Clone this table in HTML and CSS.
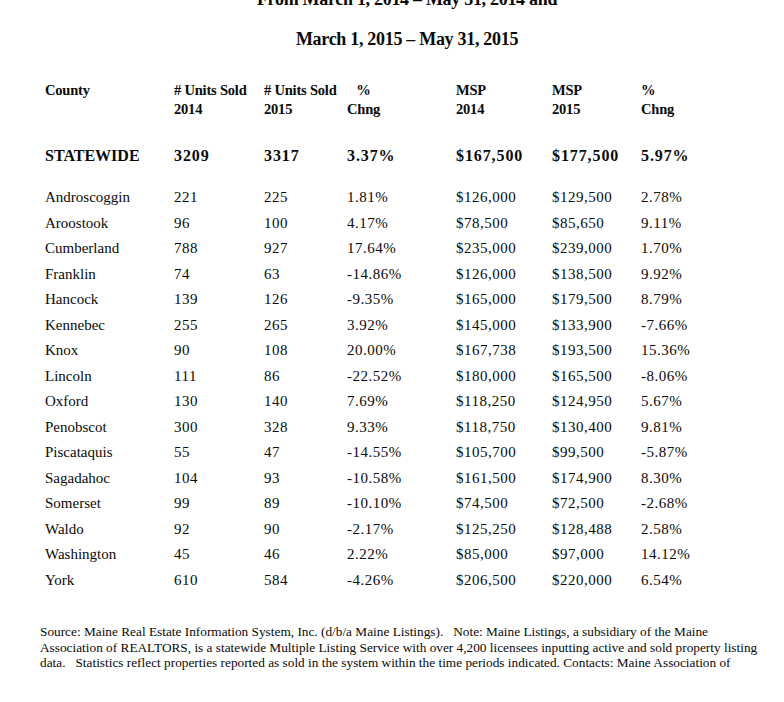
FILE: index.html
```html
<!DOCTYPE html>
<html>
<head>
<meta charset="utf-8">
<link rel="stylesheet" href="styles.css">
</head>
<body>
<div class="page">
  <div class="titles">
    <div class="title title-cut">From March 1, 2014 – May 31, 2014 and</div>
    <div class="title">March 1, 2015 – May 31, 2015</div>
  </div>

  <div class="table">
    <div class="grid head">
      <div>County</div>
      <div># Units Sold<br>2014</div>
      <div># Units Sold<br>2015</div>
      <div><span class="pct-head">%<br>Chng</span></div>
      <div>MSP<br>2014</div>
      <div>MSP<br>2015</div>
      <div>%<br>Chng</div>
      <div></div>
    </div>

    <div class="grid total">
      <div>STATEWIDE</div>
      <div class="num">3209</div>
      <div class="num">3317</div>
      <div class="num">3.37%</div>
      <div class="num">$167,500</div>
      <div class="num">$177,500</div>
      <div class="num">5.97%</div>
      <div></div>
    </div>

    <div class="rows">
      <div class="grid row"><div>Androscoggin</div><div class="num">221</div><div class="num">225</div><div class="num">1.81%</div><div class="num">$126,000</div><div class="num">$129,500</div><div class="num">2.78%</div><div></div></div>
      <div class="grid row"><div>Aroostook</div><div class="num">96</div><div class="num">100</div><div class="num">4.17%</div><div class="num">$78,500</div><div class="num">$85,650</div><div class="num">9.11%</div><div></div></div>
      <div class="grid row"><div>Cumberland</div><div class="num">788</div><div class="num">927</div><div class="num">17.64%</div><div class="num">$235,000</div><div class="num">$239,000</div><div class="num">1.70%</div><div></div></div>
      <div class="grid row"><div>Franklin</div><div class="num">74</div><div class="num">63</div><div class="num">-14.86%</div><div class="num">$126,000</div><div class="num">$138,500</div><div class="num">9.92%</div><div></div></div>
      <div class="grid row"><div>Hancock</div><div class="num">139</div><div class="num">126</div><div class="num">-9.35%</div><div class="num">$165,000</div><div class="num">$179,500</div><div class="num">8.79%</div><div></div></div>
      <div class="grid row"><div>Kennebec</div><div class="num">255</div><div class="num">265</div><div class="num">3.92%</div><div class="num">$145,000</div><div class="num">$133,900</div><div class="num">-7.66%</div><div></div></div>
      <div class="grid row"><div>Knox</div><div class="num">90</div><div class="num">108</div><div class="num">20.00%</div><div class="num">$167,738</div><div class="num">$193,500</div><div class="num">15.36%</div><div></div></div>
      <div class="grid row"><div>Lincoln</div><div class="num">111</div><div class="num">86</div><div class="num">-22.52%</div><div class="num">$180,000</div><div class="num">$165,500</div><div class="num">-8.06%</div><div></div></div>
      <div class="grid row"><div>Oxford</div><div class="num">130</div><div class="num">140</div><div class="num">7.69%</div><div class="num">$118,250</div><div class="num">$124,950</div><div class="num">5.67%</div><div></div></div>
      <div class="grid row"><div>Penobscot</div><div class="num">300</div><div class="num">328</div><div class="num">9.33%</div><div class="num">$118,750</div><div class="num">$130,400</div><div class="num">9.81%</div><div></div></div>
      <div class="grid row"><div>Piscataquis</div><div class="num">55</div><div class="num">47</div><div class="num">-14.55%</div><div class="num">$105,700</div><div class="num">$99,500</div><div class="num">-5.87%</div><div></div></div>
      <div class="grid row"><div>Sagadahoc</div><div class="num">104</div><div class="num">93</div><div class="num">-10.58%</div><div class="num">$161,500</div><div class="num">$174,900</div><div class="num">8.30%</div><div></div></div>
      <div class="grid row"><div>Somerset</div><div class="num">99</div><div class="num">89</div><div class="num">-10.10%</div><div class="num">$74,500</div><div class="num">$72,500</div><div class="num">-2.68%</div><div></div></div>
      <div class="grid row"><div>Waldo</div><div class="num">92</div><div class="num">90</div><div class="num">-2.17%</div><div class="num">$125,250</div><div class="num">$128,488</div><div class="num">2.58%</div><div></div></div>
      <div class="grid row"><div>Washington</div><div class="num">45</div><div class="num">46</div><div class="num">2.22%</div><div class="num">$85,000</div><div class="num">$97,000</div><div class="num">14.12%</div><div></div></div>
      <div class="grid row"><div>York</div><div class="num">610</div><div class="num">584</div><div class="num">-4.26%</div><div class="num">$206,500</div><div class="num">$220,000</div><div class="num">6.54%</div><div></div></div>
    </div>
  </div>

  <p class="note">Source: Maine Real Estate Information System, Inc. (d/b/a Maine Listings).&nbsp;&nbsp;&nbsp;Note: Maine Listings, a subsidiary of the Maine<br>Association of REALTORS, is a statewide Multiple Listing Service with over 4,200 licensees inputting active and sold property listing<br>data.&nbsp;&nbsp;&nbsp;Statistics reflect properties reported as sold in the system within the time periods indicated. Contacts: Maine Association of</p>
</div>
</body>
</html>
```

FILE: styles.css
```css
html, body {
  margin: 0;
  padding: 0;
  background: #ffffff;
}

body {
  width: 784px;
  height: 702px;
  overflow: hidden;
  color: #0a0a0a;
  font-family: "Liberation Serif", "Times New Roman", serif;
}

.page {
  display: flex;
  flex-direction: column;
}

.titles {
  display: flex;
  flex-direction: column;
  gap: 20px;
  margin-top: -11px;
  padding-left: 30px;
}

.title {
  font-size: 18px;
  line-height: 20px;
  font-weight: bold;
  text-align: center;
  letter-spacing: -0.3px;
  white-space: nowrap;
}

.table {
  display: flex;
  flex-direction: column;
  padding-left: 45px;
}

.grid {
  display: grid;
  grid-template-columns: 129px 90px 83px 109px 96px 89px 1fr;
  align-items: baseline;
}

.head {
  margin-top: 32px;
  align-items: start;
  font-size: 14.5px;
  line-height: 19px;
  font-weight: bold;
  letter-spacing: -0.2px;
}

.pct-head {
  display: block;
  text-align: center;
  width: 33px;
}

.total {
  margin-top: 27px;
  font-size: 16px;
  line-height: 20px;
  font-weight: bold;
}

.total .num {
  letter-spacing: 0.9px;
}

.rows {
  margin-top: 19px;
  display: flex;
  flex-direction: column;
}

.row {
  font-size: 15px;
  line-height: 25.5px;
}

.row .num {
  letter-spacing: 0.5px;
}

.note {
  margin: 31px 0 0 40px;
  font-size: 13.3px;
  line-height: 15.5px;
  white-space: nowrap;
}
```
